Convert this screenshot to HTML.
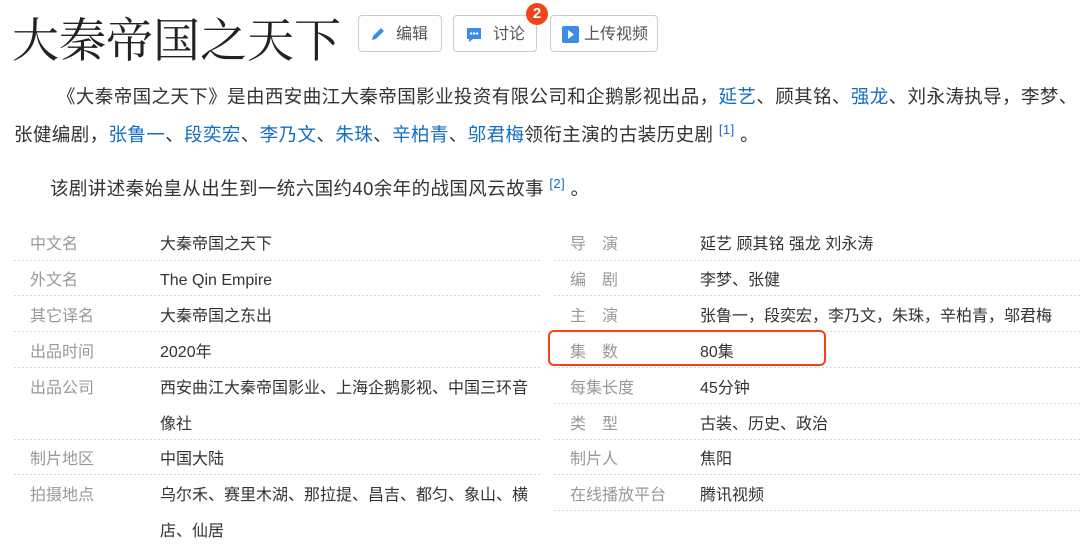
<!DOCTYPE html>
<html><head><meta charset="utf-8"><style>
body{margin:0;width:1080px;height:546px;background:#fff;overflow:hidden;position:relative;font-family:"Liberation Sans","Noto Sans CJK SC",sans-serif;}
.a{position:absolute;white-space:nowrap}
h1{position:absolute;left:12px;top:4px;margin:0;font:400 47px "Noto Serif CJK SC",serif;color:#222;letter-spacing:0px}
.btn{position:absolute;top:15px;height:37px;border:1px solid #ccc;border-radius:4px;box-sizing:border-box;font-size:16px;color:#555;line-height:37px;background:#fff}
.btn svg{position:absolute;left:11px;top:10px}
.p{font-size:18.5px;color:#333;letter-spacing:0.4px;line-height:24px}
.p a{color:#136ec2}
sup{color:#136ec2;font-size:13px}
.l{position:absolute;left:30px;font-size:16px;color:#999;line-height:20px}
.v{position:absolute;font-size:16px;color:#333;line-height:20px}
.m{line-height:36px}
.t{position:absolute;left:0;top:3px;width:1080px;height:546px}
.sep{position:absolute;height:1px;background:repeating-linear-gradient(90deg,#d8d8d8 0 2px,transparent 2px 4px)}
</style></head><body>
<h1>大秦帝国之天下</h1>
<div class="btn" style="left:358px;width:84px;padding-left:37px"><svg width="16" height="16" viewBox="0 0 16 16"><path d="M2 14l1-4 8-8 3 3-8 8z" fill="#3c8de8"/></svg>编辑</div>
<div class="btn" style="left:453px;width:84px;padding-left:39px"><svg width="18" height="18" viewBox="0 0 18 18"><path d="M2 2h14v11H8l-4 3v-3H2z" fill="#3c8de8"/><circle cx="6" cy="7.5" r="1.2" fill="#fff"/><circle cx="9" cy="7.5" r="1.2" fill="#fff"/><circle cx="12" cy="7.5" r="1.2" fill="#fff"/></svg>讨论</div>
<div style="position:absolute;left:526px;top:3px;width:22px;height:22px;border-radius:50%;background:#f0441c;color:#fff;font:bold 15px/22px 'Liberation Sans';text-align:center">2</div>
<div class="btn" style="left:550px;width:108px;padding-left:33px"><svg width="17" height="17" viewBox="0 0 17 17"><rect width="17" height="17" rx="2" fill="#3c8de8"/><path d="M6 4l6 4.5-6 4.5z" fill="#fff"/></svg>上传视频</div>

<div class="a p" style="left:57px;top:85px">《大秦帝国之天下》是由西安曲江大秦帝国影业投资有限公司和企鹅影视出品，<a>延艺</a>、顾其铭、<a>强龙</a>、刘永涛执导，李梦、</div>
<div class="a p" style="left:14px;top:118px">张健编剧，<a>张鲁一</a>、<a>段奕宏</a>、<a>李乃文</a>、<a>朱珠</a>、<a>辛柏青</a>、<a>邬君梅</a>领衔主演的古装历史剧 <sup>[1]</sup> 。</div>
<div class="a p" style="left:50px;top:172px">该剧讲述秦始皇从出生到一统六国约40余年的战国风云故事 <sup>[2]</sup> 。</div>

<div class="t">
<div class="a l" style="top:232px">中文名</div><div class="a v" style="left:160px;top:232px">大秦帝国之天下</div>
<div class="a l" style="top:268px">外文名</div><div class="a v" style="left:160px;top:268px">The Qin Empire</div>
<div class="a l" style="top:304px">其它译名</div><div class="a v" style="left:160px;top:304px">大秦帝国之东出</div>
<div class="a l" style="top:340px">出品时间</div><div class="a v" style="left:160px;top:340px">2020年</div>
<div class="a l" style="top:376px">出品公司</div><div class="a v m" style="left:160px;top:368px">西安曲江大秦帝国影业、上海企鹅影视、中国三环音<br>像社</div>
<div class="a l" style="top:447px">制片地区</div><div class="a v" style="left:160px;top:447px">中国大陆</div>
<div class="a l" style="top:483px">拍摄地点</div><div class="a v m" style="left:160px;top:475px">乌尔禾、赛里木湖、那拉提、昌吉、都匀、象山、横<br>店、仙居</div>

<div class="a l" style="left:570px;top:232px">导　演</div><div class="a v" style="left:700px;top:232px">延艺 顾其铭 强龙 刘永涛</div>
<div class="a l" style="left:570px;top:268px">编　剧</div><div class="a v" style="left:700px;top:268px">李梦、张健</div>
<div class="a l" style="left:570px;top:304px">主　演</div><div class="a v" style="left:700px;top:304px">张鲁一，段奕宏，李乃文，朱珠，辛柏青，邬君梅</div>
<div class="a l" style="left:570px;top:340px">集　数</div><div class="a v" style="left:700px;top:340px">80集</div>
<div class="a l" style="left:570px;top:376px">每集长度</div><div class="a v" style="left:700px;top:376px">45分钟</div>
<div class="a l" style="left:570px;top:412px">类　型</div><div class="a v" style="left:700px;top:412px">古装、历史、政治</div>
<div class="a l" style="left:570px;top:447px">制片人</div><div class="a v" style="left:700px;top:447px">焦阳</div>
<div class="a l" style="left:570px;top:483px">在线播放平台</div><div class="a v" style="left:700px;top:483px">腾讯视频</div>
</div>

<div class="sep" style="left:14px;width:528px;top:260px"></div>
<div class="sep" style="left:14px;width:528px;top:295px"></div>
<div class="sep" style="left:14px;width:528px;top:331px"></div>
<div class="sep" style="left:14px;width:528px;top:367px"></div>
<div class="sep" style="left:14px;width:528px;top:439px"></div>
<div class="sep" style="left:14px;width:528px;top:474px"></div>
<div class="sep" style="left:554px;width:526px;top:260px"></div>
<div class="sep" style="left:554px;width:526px;top:295px"></div>
<div class="sep" style="left:554px;width:526px;top:331px"></div>
<div class="sep" style="left:554px;width:526px;top:367px"></div>
<div class="sep" style="left:554px;width:526px;top:403px"></div>
<div class="sep" style="left:554px;width:526px;top:439px"></div>
<div class="sep" style="left:554px;width:526px;top:474px"></div>
<div class="sep" style="left:554px;width:526px;top:510px"></div>
<div style="position:absolute;left:548px;top:330px;width:274px;height:32px;border:2.5px solid #f0441c;border-radius:6px"></div>
</body></html>
